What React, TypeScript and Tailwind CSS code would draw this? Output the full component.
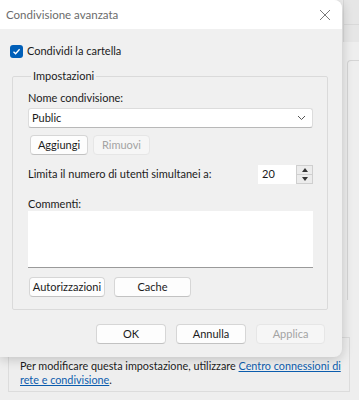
import React from "react";

const font = { fontFamily: '"Segoe UI", Lato, "Noto Sans", sans-serif' };

function Btn({ label, w, disabled = false }: { label: string; w: string; disabled?: boolean }) {
  return (
    <button
      className={`${w} flex h-[20px] items-center justify-center rounded-[4px] border text-[11px] ${
        disabled
          ? "border-[#e6e6e6] bg-[#f6f6f6] text-[#a3a3a3]"
          : "border-[#d6d6d6] border-b-[#c2c2c2] bg-[#fdfdfd] text-[#1b1b1b]"
      }`}
    >
      {label}
    </button>
  );
}

function Dialog() {
  return (
    <div className="absolute left-0 top-0 flex h-[357px] w-[342px] flex-col overflow-hidden rounded-r-[8px] bg-[#f0f0f0] shadow-[0_2px_12px_rgba(0,0,0,0.2)]">
      {/* barra del titolo */}
      <div className="flex h-[29px] items-center justify-between bg-white pl-[6px] pr-[10px]">
        <span className="text-[11.5px] text-[#6b6b6b]">Condivisione avanzata</span>
        <svg width="12" height="12" viewBox="0 0 12 12" className="mr-[1px]">
          <path d="M1 1 L11 11 M11 1 L1 11" stroke="#7a7a7a" strokeWidth="1" />
        </svg>
      </div>

      <div className="flex flex-1 flex-col pt-[14px]">
        <label className="flex h-[16px] items-center pl-[10px] text-[11px] text-[#1b1b1b]">
          <span className="mr-[4px] flex h-[13px] w-[13px] items-center justify-center rounded-[3px] bg-[#005fb8]">
            <svg width="9" height="9" viewBox="0 0 9 9">
              <path d="M1.5 4.7 L3.6 6.8 L7.6 2.2" stroke="white" strokeWidth="1.3" fill="none" />
            </svg>
          </span>
          Condividi la cartella
        </label>

        <fieldset className="ml-[12px] mt-[9px] w-[316px] rounded-[2px] border border-[#dadada] pb-[12px] pl-[15px] pr-[14px]">
          <legend className="ml-[3px] px-[2px] text-[11px] leading-[16px] text-[#1b1b1b]">Impostazioni</legend>
          <div className="mt-[6px] text-[11px] leading-[16px] text-[#1b1b1b]">Nome condivisione:</div>
          <div className="mt-[2px] flex h-[20px] items-center justify-between rounded-[3px] border border-[#dcdcdc] border-b-[#b8b8b8] bg-white pl-[3px] pr-[6px] text-[11px] text-[#1b1b1b]">
            <span>Public</span>
            <svg width="9" height="6" viewBox="0 0 9 6">
              <path d="M1 1 L4.5 4.5 L8 1" stroke="#555" strokeWidth="1" fill="none" />
            </svg>
          </div>
          <div className="mt-[7px] flex gap-[5px] pl-[2px]">
            <Btn label="Aggiungi" w="w-[58px]" />
            <Btn label="Rimuovi" w="w-[57px]" disabled />
          </div>
          <div className="mt-[10px] flex h-[19px] items-center justify-between text-[11px] text-[#1b1b1b]">
            <span>Limita il numero di utenti simultanei a:</span>
            <div className="flex h-[19px]">
              <div className="flex w-[38px] items-center bg-white pl-[4px]">20</div>
              <div className="flex w-[17px] flex-col border border-[#cfcfcf] bg-[#ececec]">
                <div className="flex flex-1 items-center justify-center border-b border-[#cfcfcf]">
                  <svg width="6" height="4" viewBox="0 0 6 4"><path d="M0 4 L3 0 L6 4 Z" fill="#333" /></svg>
                </div>
                <div className="flex flex-1 items-center justify-center">
                  <svg width="6" height="4" viewBox="0 0 6 4"><path d="M0 0 L3 4 L6 0 Z" fill="#333" /></svg>
                </div>
              </div>
            </div>
          </div>
          <div className="mt-[13px] text-[11px] leading-[13px] text-[#1b1b1b]">Commenti:</div>
          <div className="mt-[1px] h-[57px] border-b border-b-[#9a9a9a] bg-white" />
          <div className="mt-[9px] flex gap-[9px] pl-[1px]">
            <Btn label="Autorizzazioni" w="w-[76px]" />
            <Btn label="Cache" w="w-[77px]" />
          </div>
        </fieldset>

        <div className="mt-[14px] flex justify-end gap-[10px] pr-[17px]">
          <Btn label="OK" w="w-[70px]" />
          <Btn label="Annulla" w="w-[70px]" />
          <Btn label="Applica" w="w-[69px]" disabled />
        </div>
      </div>
    </div>
  );
}

export default function App() {
  return (
    <div className="relative h-[400px] w-[359px] overflow-hidden bg-[#eeeeee]" style={font}>
      {/* finestra delle proprietà sottostante */}
      <div className="flex h-full flex-col">
        <div className="ml-auto h-[42px] w-[16px] border-l border-[#d9d9d9] bg-[#e6e6e6]">
          <div className="h-[25px] border-b border-[#d9d9d9]" />
        </div>
        <div className="ml-auto mr-[-4px] mt-[18px] h-[240px] w-[16px] rounded-tl-[4px] border-l border-t border-[#d4d4d4]" />
        <div className="mb-[8px] ml-[8px] mr-[9px] mt-auto whitespace-nowrap border border-[#dcdcdc] pb-[4px] pl-[11px] pt-[21px] text-[10.8px] leading-[14px] text-[#1b1b1b]">
          Per modificare questa impostazione, utilizzare{" "}
          <a className="text-[#0b5cad] underline">
            Centro connessioni di
            <br />
            rete e condivisione
          </a>
          .
        </div>
      </div>
      <Dialog />
    </div>
  );
}
